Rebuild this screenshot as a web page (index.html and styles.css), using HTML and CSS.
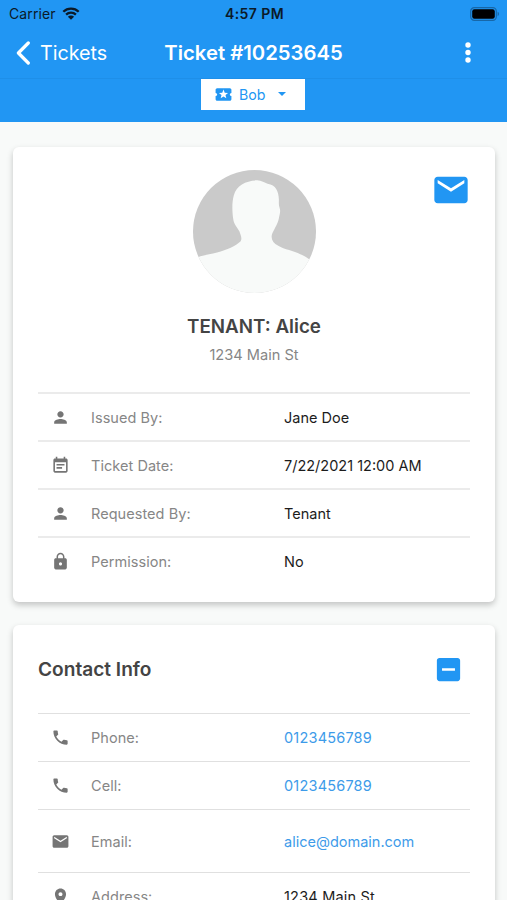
FILE: index.html
```html
<!DOCTYPE html>
<html lang="en">
<head>
    <meta charset="UTF-8">
    <meta name="viewport" content="width=device-width, initial-scale=1.0">
    <title>Ticket #10253645</title>
    <link rel="stylesheet" href="styles.css">
</head>
<body>
    <!-- icons used more than once -->
    <svg class="sprite">
        <symbol id="person" viewBox="0 0 24 24"><path d="M12 12c2.21 0 4-1.79 4-4s-1.79-4-4-4-4 1.79-4 4 1.79 4 4 4zm0 2c-2.67 0-8 1.34-8 4v2h16v-2c0-2.66-5.33-4-8-4z"/></symbol>
        <symbol id="phone" viewBox="0 0 24 24"><path d="M6.62 10.79c1.44 2.83 3.76 5.14 6.59 6.59l2.2-2.2c.27-.27.67-.36 1.02-.24 1.12.37 2.33.57 3.57.57.55 0 1 .45 1 1V20c0 .55-.45 1-1 1-9.39 0-17-7.61-17-17 0-.55.45-1 1-1h3.5c.55 0 1 .45 1 1 0 1.25.2 2.45.57 3.57.11.35.03.74-.25 1.02l-2.2 2.2z"/></symbol>
        <symbol id="mail" viewBox="0 0 24 24"><path d="M20 4H4c-1.1 0-1.99.9-1.99 2L2 18c0 1.1.9 2 2 2h16c1.1 0 2-.9 2-2V6c0-1.1-.9-2-2-2zm0 4l-8 5-8-5V6l8 5 8-5v2z"/></symbol>
    </svg>

    <header class="header">
        <div class="status-bar">
            <div class="carrier">
                <span>Carrier</span>
                <svg class="wifi" viewBox="0 0 18 13">
                    <path d="M1.3 4.7a11 11 0 0 1 15.4 0M4.1 7.6a7 7 0 0 1 9.8 0" fill="none" stroke="#0b1a28" stroke-width="2.3"/>
                    <path d="M9 12.8L5.9 9.7a4.4 4.4 0 0 1 6.2 0z" fill="#0b1a28"/>
                </svg>
            </div>
            <div class="time">4:57 PM</div>
            <svg class="battery" viewBox="0 0 30 14">
                <rect x=".7" y=".7" width="25.6" height="12.6" rx="3.6" fill="none" stroke="#1767a8" stroke-width="1.2"/>
                <rect x="2.2" y="2.2" width="22.6" height="9.6" rx="2.2"/>
                <path d="M27.6 4.8a2.4 2.4 0 0 1 0 4.4z" fill="#1767a8"/>
            </svg>
        </div>
        <nav class="nav-bar">
            <a class="back">
                <svg class="chevron" viewBox="0 0 14 24"><path d="M12.3 2L2.4 12l9.9 10" fill="none" stroke="#fff" stroke-width="3.2" stroke-linecap="round" stroke-linejoin="round"/></svg>
                <span>Tickets</span>
            </a>
            <h1 class="title">Ticket #10253645</h1>
            <svg class="more" viewBox="0 0 6 22"><circle cx="3" cy="3" r="2.7"/><circle cx="3" cy="10.5" r="2.7"/><circle cx="3" cy="18" r="2.7"/></svg>
        </nav>
        <div class="toolbar">
            <button class="user-select">
                <svg class="ticket-icon" viewBox="0 0 24 24"><path d="M20 12c0-1.1.9-2 2-2V6c0-1.1-.9-2-2-2H4c-1.1 0-1.99.9-1.99 2v4c1.1 0 1.99.9 1.99 2s-.89 2-2 2v4c0 1.1.9 2 2 2h16c1.1 0 2-.9 2-2v-4c-1.1 0-2-.9-2-2zm-4.42 4.8L12 14.5l-3.58 2.3 1.08-4.12-3.29-2.69 4.24-.25L12 5.8l1.54 3.95 4.24.25-3.29 2.69 1.09 4.11z"/></svg>
                <span>Bob</span>
                <svg class="caret" viewBox="0 0 8 4"><path d="M0 0h8L4 4z"/></svg>
            </button>
        </div>
    </header>

    <main class="content">
        <section class="card">
            <div class="profile">
                <svg class="avatar" viewBox="68 62 368 368">
                    <clipPath id="round"><circle cx="252" cy="246" r="184"/></clipPath>
                    <g clip-path="url(#round)">
                        <rect x="68" y="62" width="368" height="368" fill="#cacaca"/>
                        <path d="M60 335C92 315 112 316 140 309C170 301 196 289 210 276C216 267 211 258 207 246C202 235 191 225 189 212C185 190 184 158 190 138C198 108 226 94 258 93C272 92 282 101 291 103C316 107 324 125 325 150C325 160 324 168 327 175C331 186 327 194 325 206C322 225 308 241 304 256C301 270 308 280 323 289C341 300 370 304 389 314C405 321 417 329 440 346V440H60z" fill="#f8faf9"/>
                    </g>
                </svg>
                <h2 class="name">TENANT: Alice</h2>
                <p class="street">1234 Main St</p>
                <svg class="mail-button"><use href="#mail"/></svg>
            </div>
            <div class="row">
                <svg class="icon"><use href="#person"/></svg>
                <span class="label">Issued By:</span>
                <span class="value">Jane Doe</span>
            </div>
            <div class="row">
                <svg class="icon" viewBox="0 0 24 24"><path d="M17 10H7v2h10v-2zm2-7h-1V1h-2v2H8V1H6v2H5c-1.11 0-1.99.9-1.99 2L3 19c0 1.1.89 2 2 2h14c1.1 0 2-.9 2-2V5c0-1.1-.9-2-2-2zm0 16H5V8h14v11zm-5-5H7v2h7v-2z"/></svg>
                <span class="label">Ticket Date:</span>
                <span class="value">7/22/2021 12:00 AM</span>
            </div>
            <div class="row">
                <svg class="icon"><use href="#person"/></svg>
                <span class="label">Requested By:</span>
                <span class="value">Tenant</span>
            </div>
            <div class="row">
                <svg class="icon" viewBox="0 0 24 24"><path d="M18 8h-1V6c0-2.76-2.24-5-5-5S7 3.24 7 6v2H6c-1.1 0-2 .9-2 2v10c0 1.1.9 2 2 2h12c1.1 0 2-.9 2-2V10c0-1.1-.9-2-2-2zm-6 9c-1.1 0-2-.9-2-2s.9-2 2-2 2 .9 2 2-.9 2-2 2zm3.1-9H8.9V6c0-1.71 1.39-3.1 3.1-3.1 1.71 0 3.1 1.39 3.1 3.1v2z"/></svg>
                <span class="label">Permission:</span>
                <span class="value">No</span>
            </div>
        </section>

        <section class="card contact">
            <div class="card-header">
                <h2 class="card-title">Contact Info</h2>
                <svg class="collapse" viewBox="0 0 24 24"><path d="M19 3H5c-1.1 0-2 .9-2 2v14c0 1.1.9 2 2 2h14c1.1 0 2-.9 2-2V5c0-1.1-.9-2-2-2zm-2 10H7v-2h10v2z"/></svg>
            </div>
            <div class="row">
                <svg class="icon"><use href="#phone"/></svg>
                <span class="label">Phone:</span>
                <a class="value link number">0123456789</a>
            </div>
            <div class="row">
                <svg class="icon"><use href="#phone"/></svg>
                <span class="label">Cell:</span>
                <a class="value link number">0123456789</a>
            </div>
            <div class="row row-tall">
                <svg class="icon"><use href="#mail"/></svg>
                <span class="label">Email:</span>
                <a class="value link">alice@domain.com</a>
            </div>
            <div class="row">
                <svg class="icon" viewBox="0 0 24 24"><path d="M12 2C8.13 2 5 5.13 5 9c0 5.25 7 13 7 13s7-7.75 7-13c0-3.87-3.13-7-7-7zm0 9.5c-1.38 0-2.5-1.12-2.5-2.5s1.12-2.5 2.5-2.5 2.5 1.12 2.5 2.5-1.12 2.5-2.5 2.5z"/></svg>
                <span class="label">Address:</span>
                <span class="value number">1234 Main St</span>
            </div>
        </section>
    </main>
</body>
</html>
```

FILE: styles.css
```css
* {
    box-sizing: border-box;
}
body {
    margin: 0;
    height: 900px;
    overflow: hidden;
    font-family: Inter, "Liberation Sans", sans-serif;
    background-color: #f8faf9;
    color: #1c1c1c;
}
h1, h2, p {
    margin: 0;
}
svg {
    display: block;
    flex-shrink: 0;
}
.sprite {
    position: absolute;
    width: 0;
    height: 0;
}

/* header */
.header {
    height: 122px;
    background: #2196f3;
}
.status-bar {
    display: grid;
    grid-template-columns: 1fr auto 1fr;
    align-items: center;
    height: 27px;
    padding: 0 7px 0 9px;
    font-size: 14px;
    color: #0b1a28;
}
.carrier {
    display: flex;
    align-items: center;
    gap: 6px;
    letter-spacing: 0.1px;
}
.wifi {
    width: 18px;
    height: 13px;
}
.time {
    font-weight: 600;
    letter-spacing: 0.4px;
}
.battery {
    width: 30px;
    height: 14px;
    justify-self: end;
}
.nav-bar {
    display: grid;
    grid-template-columns: 1fr auto 1fr;
    align-items: center;
    height: 52px;
    padding: 0 36px;
    border-bottom: 1px solid #1e8fe9;
    color: white;
}
.back {
    display: flex;
    align-items: center;
    gap: 10px;
    margin-left: -20px;
    font-size: 19.7px;
}
.chevron {
    width: 14px;
    height: 24px;
}
.title {
    font-size: 20.3px;
    font-weight: 600;
}
.more {
    width: 6px;
    height: 22px;
    justify-self: end;
    fill: white;
}
.toolbar {
    display: flex;
    justify-content: center;
    padding-right: 1px;
}
.user-select {
    display: flex;
    align-items: center;
    width: 104px;
    height: 31px;
    padding: 0 0 1px 13px;
    border: none;
    background: white;
    color: #2196f3;
    font-family: inherit;
    font-size: 14.2px;
}
.ticket-icon {
    width: 19px;
    height: 19px;
    margin-right: 6px;
    fill: #2196f3;
}
.caret {
    width: 8px;
    height: 4px;
    margin-left: 13px;
    fill: #2196f3;
}

/* cards */
.content {
    padding: 25px 12px 0 13px;
}
.card {
    padding: 0 25px 18px;
    margin-bottom: 23px;
    background: white;
    border-radius: 6px;
    box-shadow: 0 3px 6px rgba(0, 0, 0, 0.22);
}
.profile {
    position: relative;
    display: flex;
    flex-direction: column;
    align-items: center;
    height: 245px;
    padding-top: 23px;
}
.avatar {
    width: 123px;
    height: 123px;
}
.name {
    margin-top: 22px;
    font-size: 18.8px;
    line-height: 24px;
    font-weight: 600;
    color: #444;
}
.street {
    margin-top: 6px;
    font-size: 14.6px;
    line-height: 20px;
    color: #868686;
}
/* sits over the corner of the profile block */
.mail-button {
    position: absolute;
    top: 23px;
    right: -1px;
    width: 40px;
    height: 40px;
    fill: #2196f3;
}
.card-header {
    display: flex;
    align-items: center;
    justify-content: space-between;
    height: 88px;
    padding-right: 6px;
}
.card-title {
    font-size: 19.1px;
    font-weight: 600;
    color: #444;
}
.collapse {
    width: 31px;
    height: 31px;
    fill: #2196f3;
}

/* detail rows */
.row {
    display: grid;
    grid-template-columns: 40px 193px 1fr;
    align-items: center;
    height: 48px;
    padding-left: 13px;
    border-top: 2px solid #ebebeb;
    font-size: 14.5px;
}
.contact .row {
    border-top: 1px solid #e0e0e0;
}
.contact .row-tall {
    height: 63px;
}
.icon {
    width: 19px;
    height: 19px;
    fill: #757575;
}
.label {
    color: #868686;
    letter-spacing: 0.05px;
}
.number {
    letter-spacing: 0.2px;
}
.link {
    color: #3d9be9;
}
```
